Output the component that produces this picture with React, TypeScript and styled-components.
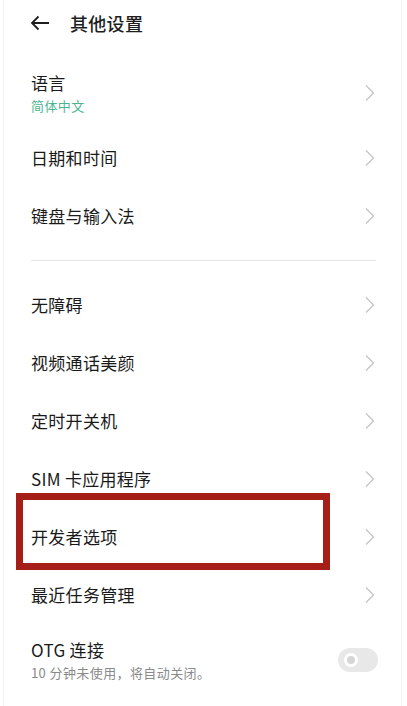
import React from "react";
import styled, { createGlobalStyle } from "styled-components";

const GlobalStyle = createGlobalStyle`
	html, body {
		margin: 0;
		padding: 0;
		background: #ffffff;
	}
	body {
		font-family: "Noto Sans CJK SC", "Noto Sans", sans-serif;
		color: #1e1e1e;
	}
`;

interface Item {
	title: string;
	sub?: string;
	accent?: boolean;
	marked?: boolean;
}

const topItems: Item[] = [
	{ title: "语言", sub: "简体中文", accent: true },
	{ title: "日期和时间" },
	{ title: "键盘与输入法" },
];

const bottomItems: Item[] = [
	{ title: "无障碍" },
	{ title: "视频通话美颜" },
	{ title: "定时开关机" },
	{ title: "SIM 卡应用程序" },
	{ title: "开发者选项", marked: true },
	{ title: "最近任务管理" },
];

const Chevron = () => (
	<svg width="12" height="18" viewBox="0 0 12 18" fill="none">
		<path d="M2 1.5 L9.5 9 L2 16.5" stroke="#c6c6c6" strokeWidth="1.4" />
	</svg>
);

const BackArrow = () => (
	<svg width="20" height="16" viewBox="0 0 20 16" fill="none">
		<path d="M19 8 H2 M8.5 1.5 L2 8 L8.5 14.5" stroke="#1e1e1e" strokeWidth="1.8" />
	</svg>
);

const App = () => {
	const outputRows = (items: Item[]) => {
		return items.map((item, i) => (
			<Row key={i} tall={!!item.sub}>
				<TextBlock>
					<Title>{item.title}</Title>
					{item.sub && <Sub accent={item.accent}>{item.sub}</Sub>}
				</TextBlock>
				<Chevron />
				{item.marked && <Marker />}
			</Row>
		));
	};

	return (
		<>
			<GlobalStyle />
			<Frame>
				<Header>
					<BackArrow />
					<HeaderTitle>其他设置</HeaderTitle>
				</Header>
				<List>{outputRows(topItems)}</List>
				<Divider />
				<List>
					{outputRows(bottomItems)}
					<Row tall>
						<TextBlock>
							<Title>OTG 连接</Title>
							<Sub>10 分钟未使用，将自动关闭。</Sub>
						</TextBlock>
						<Toggle>
							<Knob />
						</Toggle>
					</Row>
				</List>
			</Frame>
		</>
	);
};

const Frame = styled.div`
	width: 399px;
	height: 706px;
	box-sizing: border-box;
	border-left: 1px solid #f4f4f4;
	border-right: 1px solid #f4f4f4;
	margin: 0 3px;
	overflow: hidden;
`;

const Header = styled.div`
	height: 57px;
	display: flex;
	align-items: flex-start;
	padding: 14px 0 0 26px;
	box-sizing: border-box;
	gap: 20px;

	svg {
		margin-top: 1px;
	}
`;

const HeaderTitle = styled.div`
	font-size: 18px;
	font-weight: 500;
	line-height: 18px;
	letter-spacing: 0.3px;
`;

const List = styled.div`
	display: flex;
	flex-direction: column;
`;

const Row = styled.div<{ tall?: boolean }>`
	position: relative;
	height: ${({ tall }) => (tall ? "72px" : "58px")};
	display: flex;
	align-items: center;
	justify-content: space-between;
	padding: 0 25px 0 27px;
	box-sizing: border-box;
`;

const TextBlock = styled.div`
	display: flex;
	flex-direction: column;
	gap: 3px;
`;

const Title = styled.div`
	font-size: 17px;
	line-height: 22px;
	letter-spacing: 0.3px;
	color: #1a1a1a;
`;

const Sub = styled.div<{ accent?: boolean }>`
	font-size: 13px;
	line-height: 18px;
	letter-spacing: 0.4px;
	color: ${({ accent }) => (accent ? "#4cb58f" : "#8a8a8a")};
`;

const Divider = styled.div`
	height: 1px;
	background: #e6e6e6;
	margin: 15px 25px 15px 27px;
`;

const Marker = styled.div`
	position: absolute;
	left: 12px;
	top: -15px;
	width: 314px;
	height: 77px;
	box-sizing: border-box;
	border: 7px solid #a61e18;
	pointer-events: none;
`;

const Toggle = styled.div`
	width: 40px;
	height: 24px;
	border-radius: 12px;
	background: #e8e8e8;
	display: flex;
	align-items: center;
	padding-left: 6px;
	box-sizing: border-box;
	margin-right: -2px;
`;

const Knob = styled.div`
	width: 14px;
	height: 14px;
	border-radius: 50%;
	box-sizing: border-box;
	border: 3px solid #ffffff;
	background: #d6d6d6;
`;

export default App;
